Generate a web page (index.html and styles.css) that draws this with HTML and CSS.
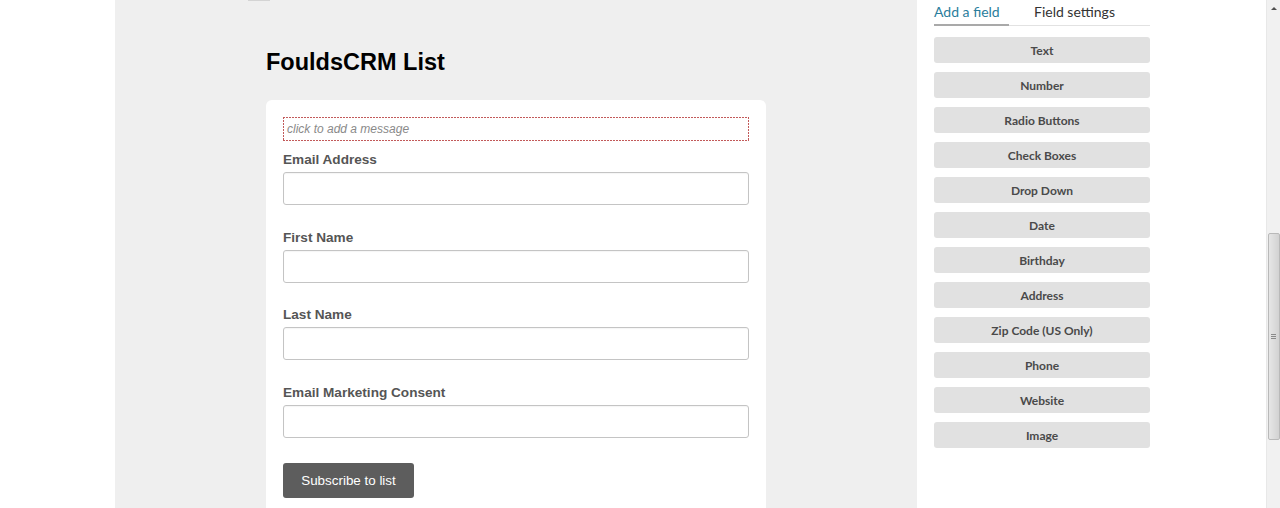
FILE: index.html
```html
<!DOCTYPE html>
<html>
<head>
<meta charset="utf-8">
<link rel="stylesheet" href="styles.css">
</head>
<body>
<div class="page">
  <div class="gutter"></div>
  <main class="canvas">
    <div class="sheet">
      <div class="top-tab"></div>
      <h1 class="title">FouldsCRM List</h1>
      <form class="card">
        <div class="message">click to add a message</div>
        <div class="field">
          <label class="label">Email Address</label>
          <div class="input"></div>
        </div>
        <div class="field">
          <label class="label">First Name</label>
          <div class="input"></div>
        </div>
        <div class="field">
          <label class="label">Last Name</label>
          <div class="input"></div>
        </div>
        <div class="field">
          <label class="label">Email Marketing Consent</label>
          <div class="input"></div>
        </div>
        <button type="button" class="submit">Subscribe to list</button>
      </form>
    </div>
  </main>
  <aside class="panel">
    <div class="tabs">
      <div class="tab active">Add a field</div>
      <div class="tab">Field settings</div>
    </div>
    <div class="field-buttons">
      <div class="fbtn">Text</div>
      <div class="fbtn">Number</div>
      <div class="fbtn">Radio Buttons</div>
      <div class="fbtn">Check Boxes</div>
      <div class="fbtn">Drop Down</div>
      <div class="fbtn">Date</div>
      <div class="fbtn">Birthday</div>
      <div class="fbtn">Address</div>
      <div class="fbtn">Zip Code (US Only)</div>
      <div class="fbtn">Phone</div>
      <div class="fbtn">Website</div>
      <div class="fbtn">Image</div>
    </div>
  </aside>
  <div class="scrollbar">
    <div class="arrow"></div>
    <div class="thumb"><div class="grip"></div></div>
  </div>
</div>
</body>
</html>
```

FILE: styles.css
```css
html, body {
  margin: 0;
  padding: 0;
  width: 1280px;
  height: 508px;
  overflow: hidden;
  background: #fff;
}
.page {
  display: flex;
  height: 508px;
  overflow: hidden;
}
.gutter {
  width: 115px;
  flex: none;
  background: #fff;
}
.canvas {
  width: 802px;
  flex: none;
  background: #efefef;
}
.sheet {
  margin-left: 151px;
  width: 500px;
}
.top-tab {
  width: 22px;
  height: 1px;
  margin-left: -18px;
  background: #d4d4d4;
}
.title {
  margin: 47px 0 24px 0;
  font-family: "Liberation Sans", Arial, sans-serif;
  font-weight: bold;
  font-size: 23.5px;
  line-height: 28px;
  color: #000;
}
.card {
  background: #fff;
  border-radius: 6px 6px 0 0;
  padding: 17px 17px 10px 17px;
  font-family: "Liberation Sans", Arial, sans-serif;
}
.message {
  height: 24px;
  background:
    repeating-linear-gradient(to right, #c25a5a 0 2px, transparent 2px 3px) top left / 100% 1px no-repeat,
    repeating-linear-gradient(to right, #c25a5a 0 2px, transparent 2px 3px) bottom left / 100% 1px no-repeat,
    repeating-linear-gradient(to bottom, #c25a5a 0 2px, transparent 2px 3px) top left / 1px 100% no-repeat,
    repeating-linear-gradient(to bottom, #c25a5a 0 2px, transparent 2px 3px) top right / 1px 100% no-repeat;
  font-style: italic;
  font-size: 12px;
  line-height: 24px;
  color: #8a8a8a;
  padding-left: 4px;
  margin-bottom: 11px;
}
.field {
  margin-bottom: 24.7px;
}
.field:last-of-type {
  margin-bottom: 25px;
}
.label {
  display: block;
  font-weight: bold;
  font-size: 13.6px;
  line-height: 16px;
  color: #555;
  margin-bottom: 4px;
}
.input {
  height: 31px;
  border: 1px solid #c4c4c4;
  border-radius: 3px;
  background: #fff;
  box-shadow: inset 0 1px 1px rgba(0,0,0,0.04);
}
.submit {
  display: block;
  width: 131px;
  height: 35px;
  border: none;
  border-radius: 3px;
  background: #5d5d5d;
  color: #fff;
  font-family: "Liberation Sans", Arial, sans-serif;
  font-size: 13.4px;
  padding: 0;
  text-align: center;
}
.panel {
  width: 349px;
  flex: none;
  background: #fff;
  padding-left: 17px;
  box-sizing: border-box;
  font-family: Lato, "Open Sans", sans-serif;
}
.tabs {
  display: flex;
  width: 216px;
  border-bottom: 1px solid #e2e2e2;
  height: 25px;
  margin-bottom: 11px;
}
.tab {
  font-size: 14px;
  line-height: 20px;
  padding-top: 2px;
  color: #333;
}
.tab.active {
  width: 75px;
  color: #2a7d9c;
  border-bottom: 2px solid #a9a9a9;
  margin-bottom: -1px;
  margin-right: 25px;
}
.field-buttons {
  display: flex;
  flex-direction: column;
  gap: 9px;
  width: 216px;
}
.fbtn {
  height: 26px;
  box-sizing: border-box;
  padding-top: 2px;
  line-height: 24px;
  border-radius: 3px;
  background: #e1e1e1;
  text-align: center;
  font-size: 12px;
  font-weight: bold;
  color: #4a4a4a;
}
.scrollbar {
  width: 14px;
  flex: none;
  background: #f1f1f1;
  border-left: 1px solid #e8e8e8;
  box-sizing: border-box;
  display: flex;
  flex-direction: column;
  align-items: center;
}
.arrow {
  width: 0;
  height: 0;
  margin-top: 7px;
  border-left: 3px solid transparent;
  border-right: 3px solid transparent;
  border-bottom: 3px solid #505050;
}
.thumb {
  margin-top: 223px;
  width: 12px;
  height: 207px;
  box-sizing: border-box;
  border: 1px solid #b9b9b9;
  border-radius: 2px;
  background: linear-gradient(to right, #e6e6e6, #d2d2d2);
  display: flex;
  align-items: center;
  justify-content: center;
}
.grip {
  width: 5px;
  height: 5px;
  background: repeating-linear-gradient(to bottom, #8a8a8a 0 1px, transparent 1px 2px);
}
```
